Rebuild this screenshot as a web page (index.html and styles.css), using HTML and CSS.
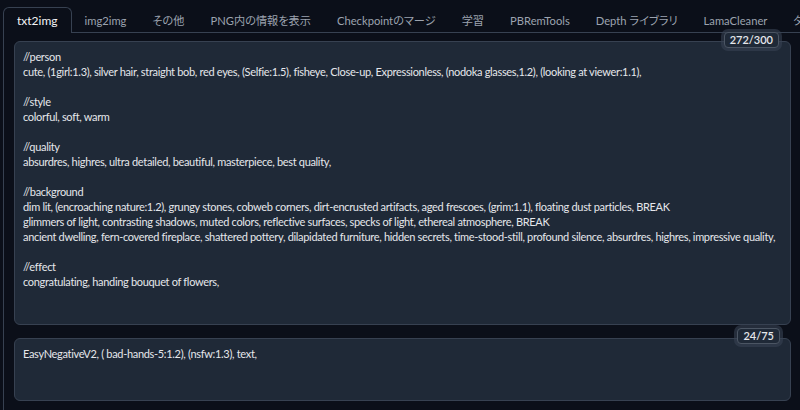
FILE: index.html
```html
<!DOCTYPE html>
<html lang="ja">
<head>
  <meta charset="UTF-8" />
  <title>Stable Diffusion – txt2img</title>
  <link rel="stylesheet" href="styles.css">
</head>
<body>

  <div class="app">
    <div class="tab-bar">
      <button class="tab active">txt2img</button>
      <button class="tab">img2img</button>
      <button class="tab">その他</button>
      <button class="tab">PNG内の情報を表示</button>
      <button class="tab">Checkpointのマージ</button>
      <button class="tab">学習</button>
      <button class="tab">PBRemTools</button>
      <button class="tab">Depth ライブラリ</button>
      <button class="tab">LamaCleaner</button>
      <button class="tab">タグ</button>
    </div>

    <div class="panel">
      <div class="prompt-box">
        <span class="token-counter">272/300</span>
        <div class="prompt prompt-main">//person
cute, (1girl:1.3), silver hair, straight bob, red eyes, (Selfie:1.5), fisheye, Close-up, Expressionless, (nodoka glasses,1.2), (looking at viewer:1.1),

//style
colorful, soft, warm

//quality
absurdres, highres, ultra detailed, beautiful, masterpiece, best quality,

//background
dim lit, (encroaching nature:1.2), grungy stones, cobweb corners, dirt-encrusted artifacts, aged frescoes, (grim:1.1), floating dust particles, BREAK
glimmers of light, contrasting shadows, muted colors, reflective surfaces, specks of light, ethereal atmosphere, BREAK
ancient dwelling, fern-covered fireplace, shattered pottery, dilapidated furniture, hidden secrets, time-stood-still, profound silence, absurdres, highres, impressive quality,

//effect
congratulating, handing bouquet of flowers,</div>
      </div>

      <div class="prompt-box">
        <span class="token-counter negative">24/75</span>
        <div class="prompt prompt-negative">EasyNegativeV2, ( bad-hands-5:1.2), (nsfw:1.3), text,</div>
      </div>
    </div>
  </div>

</body>
</html>
```

FILE: styles.css
```css
/* General */
body {
  margin: 0;
  background: #0b0f19;
  color: #e5e7eb;
  font-family: Lato, "Noto Sans CJK JP", sans-serif;
  overflow: hidden;
}

.app {
  width: 830px;
  padding: 7px 0 0 3px;
}

/* Tabs */
.tab-bar {
  display: flex;
  border-bottom: 1px solid #374151;
}

.tab {
  flex: none;
  background: none;
  border: 1px solid transparent;
  border-bottom: none;
  border-radius: 6px 6px 0 0;
  padding: 0 12px;
  height: 25px;
  margin-bottom: -1px;
  font-family: Lato, "Noto Sans CJK JP", sans-serif;
  font-feature-settings: "palt";
  font-size: 11.2px;
  color: #9ca3af;
  white-space: nowrap;
}

.tab.active {
  color: #f3f4f6;
  background: #0b0f19;
  border-color: #374151;
  height: 26px;
  font-size: 12px;
  padding: 0 13px;
}

/* Panel */
.panel {
  border-left: 1px solid #374151;
  padding: 8px 10px 10px;
  display: flex;
  flex-direction: column;
  gap: 13px;
}

.prompt-box {
  position: relative;
  width: 777px;
}

.prompt {
  box-sizing: border-box;
  background: #1f2937;
  border: 1px solid #374151;
  border-radius: 6px;
  padding: 7px 8px;
  font-size: 11px;
  letter-spacing: -0.32px;
  line-height: 15px;
  color: #e5e7eb;
  white-space: pre-wrap;
}

.prompt-main {
  height: 284px;
}

.prompt-negative {
  height: 63px;
}

/* Token counters */
.token-counter {
  position: absolute;
  top: -9px;
  right: 12px;
  z-index: 2;
  background: #1f2937;
  border: 1px solid #4b5563;
  border-radius: 4px;
  padding: 0 5px;
  height: 14px;
  line-height: 14px;
  font-size: 11px;
  font-weight: 600;
  color: #e5e7eb;
  box-shadow: 0 0 0 3px rgba(55, 65, 81, 0.6);
}

.token-counter.negative {
  top: -10px;
  right: 11px;
}
```
